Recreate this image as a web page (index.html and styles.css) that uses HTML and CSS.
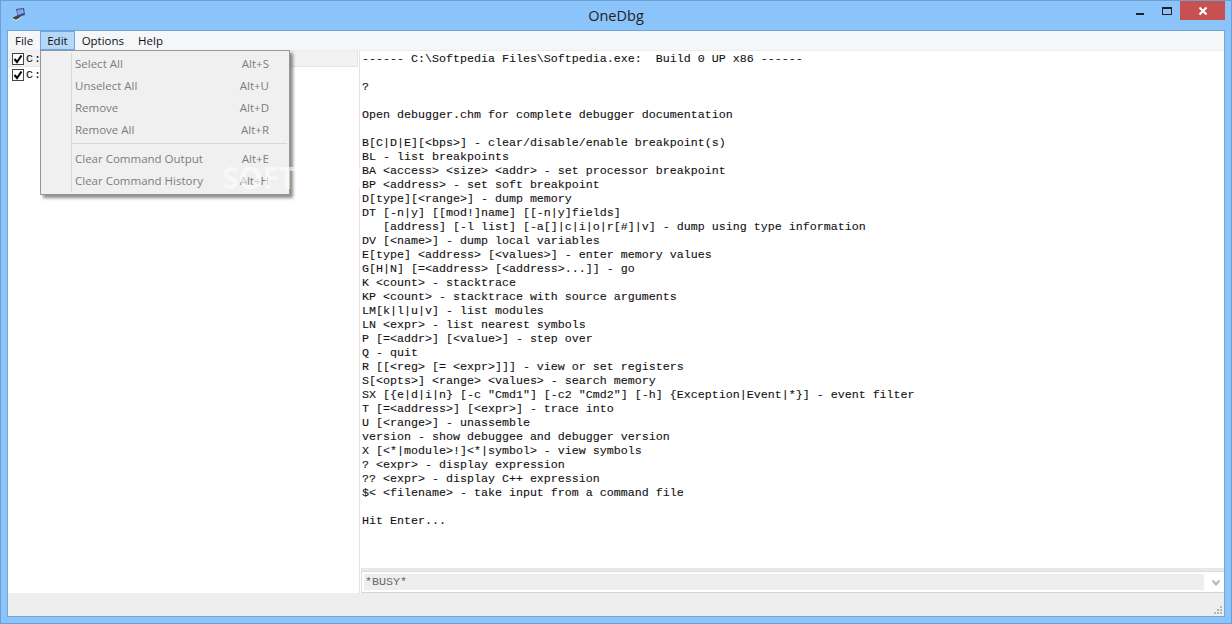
FILE: index.html
```html
<!DOCTYPE html>
<html>
<head>
<meta charset="utf-8">
<title>OneDbg</title>
<link rel="stylesheet" href="styles.css">
</head>
<body>
<div class="window">
  <header class="titlebar">
    <svg class="appicon" width="14" height="14" viewBox="0 0 14 14"><path d="M4 1l8-1 1 7-7 2z" fill="#2f4f96"/><path d="M5 2l6-1 1 4-6 2z" fill="#8fa6d8"/><path d="M0 10l6-3 3 2-5 3z" fill="#444"/><path d="M0 10l4 2 5-3v1l-5 3-4-2z" fill="#e4e4e4"/></svg>
    <div class="title">OneDbg</div>
    <div class="controls">
      <span class="min"></span>
      <span class="max"></span>
      <span class="close"><svg width="10" height="10" viewBox="0 0 10 10"><path d="M1.5 1.5l7 7M8.5 1.5l-7 7" stroke="#fff" stroke-width="2.2"/></svg></span>
    </div>
  </header>
  <div class="client">
    <nav class="menubar">
      <span class="menuitem">File</span>
      <span class="menuitem active">Edit</span>
      <span class="menuitem">Options</span>
      <span class="menuitem">Help</span>
    </nav>
    <main class="panes">
      <section class="left">
        <div class="row first"><svg class="check" width="12" height="12" viewBox="0 0 12 12"><rect x=".5" y=".5" width="11" height="11" fill="#fff" stroke="#444"/><path d="M2.5 6l2.5 3L9.5 2.5" fill="none" stroke="#000" stroke-width="2"/></svg><span class="drive">C:</span></div>
        <div class="row"><svg class="check" width="12" height="12" viewBox="0 0 12 12"><rect x=".5" y=".5" width="11" height="11" fill="#fff" stroke="#444"/><path d="M2.5 6l2.5 3L9.5 2.5" fill="none" stroke="#000" stroke-width="2"/></svg><span class="drive">C:</span></div>
      </section>
      <section class="right">
        <pre class="output">------ C:\Softpedia Files\Softpedia.exe:  Build 0 UP x86 ------

?

Open debugger.chm for complete debugger documentation

B[C|D|E][&lt;bps&gt;] - clear/disable/enable breakpoint(s)
BL - list breakpoints
BA &lt;access&gt; &lt;size&gt; &lt;addr&gt; - set processor breakpoint
BP &lt;address&gt; - set soft breakpoint
D[type][&lt;range&gt;] - dump memory
DT [-n|y] [[mod!]name] [[-n|y]fields]
   [address] [-l list] [-a[]|c|i|o|r[#]|v] - dump using type information
DV [&lt;name&gt;] - dump local variables
E[type] &lt;address&gt; [&lt;values&gt;] - enter memory values
G[H|N] [=&lt;address&gt; [&lt;address&gt;...]] - go
K &lt;count&gt; - stacktrace
KP &lt;count&gt; - stacktrace with source arguments
LM[k|l|u|v] - list modules
LN &lt;expr&gt; - list nearest symbols
P [=&lt;addr&gt;] [&lt;value&gt;] - step over
Q - quit
R [[&lt;reg&gt; [= &lt;expr&gt;]]] - view or set registers
S[&lt;opts&gt;] &lt;range&gt; &lt;values&gt; - search memory
SX [{e|d|i|n} [-c "Cmd1"] [-c2 "Cmd2"] [-h] {Exception|Event|*}] - event filter
T [=&lt;address&gt;] [&lt;expr&gt;] - trace into
U [&lt;range&gt;] - unassemble
version - show debuggee and debugger version
X [&lt;*|module&gt;!]&lt;*|symbol&gt; - view symbols
? &lt;expr&gt; - display expression
?? &lt;expr&gt; - display C++ expression
$&lt; &lt;filename&gt; - take input from a command file

Hit Enter...</pre>
        <div class="combo">
          <div class="combobox">
            <div class="combofield">*BUSY*</div>
            <svg class="arrow" width="8" height="6" viewBox="0 0 8 6"><path d="M.5 .5L4 4.5 7.5 .5" fill="none" stroke="#b4b4b4" stroke-width="2"/></svg>
          </div>
        </div>
      </section>
    </main>
    <footer class="status">
      <svg class="grip" width="9" height="9" viewBox="0 0 9 9" fill="#b8b8b8"><rect x="6" y="0" width="2" height="2"/><rect x="3" y="3" width="2" height="2"/><rect x="6" y="3" width="2" height="2"/><rect x="0" y="6" width="2" height="2"/><rect x="3" y="6" width="2" height="2"/><rect x="6" y="6" width="2" height="2"/></svg>
    </footer>
  </div>
</div>
<div class="menu">
  <div class="entry"><span>Select All</span><span>Alt+S</span></div>
  <div class="entry"><span>Unselect All</span><span>Alt+U</span></div>
  <div class="entry"><span>Remove</span><span>Alt+D</span></div>
  <div class="entry"><span>Remove All</span><span>Alt+R</span></div>
  <div class="sep"></div>
  <div class="entry"><span>Clear Command Output</span><span>Alt+E</span></div>
  <div class="entry"><span>Clear Command History</span><span>Alt+H</span></div>
</div>
<div class="watermark">SOFTPEDIA</div>
</body>
</html>
```
FILE: styles.css
```css
* { box-sizing: border-box; }
html, body { margin: 0; height: 100%; overflow: hidden; }
body { font-family: "Open Sans", "Noto Sans", sans-serif; font-size: 11.5px; color: #000; }
.window { width: 1232px; height: 624px; background: #8ac4fb; border: 1px solid #6e9fcf; display: flex; flex-direction: column; padding: 0 6px 6px; }
.titlebar { height: 29px; flex: none; display: flex; align-items: center; position: relative; margin: 0 -6px; }
.appicon { margin: -2px 0 0 11px; }
.title { position: absolute; left: 0; right: 0; text-align: center; font-size: 14.5px; color: #222; top: 5px; }
.controls { position: absolute; right: 6px; top: 0; display: flex; height: 19px; }
.min { position: absolute; right: 81px; top: 12px; width: 8px; height: 2px; background: #222; }
.max { position: absolute; right: 53px; top: 6px; width: 10px; height: 8px; border: 1px solid #222; border-top-width: 2px; }
.close { width: 45px; height: 19px; background: #c75050; display: flex; align-items: center; justify-content: center; }
.client { flex: 1; background: #fff; border: 1px solid #72a5d6; display: flex; flex-direction: column; min-height: 0; }
.menubar { height: 19px; flex: none; background: #f5f6f7; display: flex; }
.menuitem { padding: 0 6px; line-height: 18px; border: 1px solid transparent; height: 19px; color: #111; }
.menuitem.active { background: #b5d7f8; border-color: #66a7e8; }
.panes { flex: 1; display: flex; min-height: 0; border-top: 1px solid #ececec; }
.left { width: 352px; flex: none; border-right: 1px solid #e3e3e3; }
.row { height: 15px; display: flex; align-items: center; padding-left: 4px; gap: 2px; }
.row.first { background: #f2f2f2; border-right: 1px solid #e3e3e3; border-bottom: 1px solid #e3e3e3; height: 16px; margin-right: 1px; }
.check { flex: none; }
.drive { font-family: "Liberation Mono", monospace; font-size: 11.67px; letter-spacing: 1px; color: #111; -webkit-text-stroke: .1px #111; }
.right { flex: 1; min-width: 0; display: flex; flex-direction: column; }
.output { flex: 1; margin: 0; padding: 1px 0 0 2px; font-family: "Liberation Mono", monospace; font-size: 11.67px; line-height: 14px; color: #111; overflow: hidden; -webkit-text-stroke: .1px #111; }
.combo { height: 25px; flex: none; margin-left: 1px; border-top: 3px solid #e8e8e8; border-bottom: 1px solid #d6d6d6; }
.combobox { height: 21px; border-top: 1px solid #ddd; border-left: 1px solid #ddd; padding: 2px 0 0 2px; display: flex; align-items: flex-start; }
.combofield { width: 840px; height: 16px; background: #eee; font-family: "Liberation Mono", monospace; font-size: 11.67px; line-height: 17px; color: #666; padding-left: 1px; }
.arrow { margin: 6px 0 0 8px; }
.status { height: 23px; flex: none; background: #eee; position: relative; }
.grip { position: absolute; right: 1px; bottom: 1px; }
.menu { position: absolute; left: 40px; top: 50px; width: 250px; height: 145px; background: #f0f0f0; border: 1px solid #979797; box-shadow: 3px 3px 3px rgba(0,0,0,.45); padding-top: 1px; }
.menu::before { content: ""; position: absolute; left: 30px; top: 2px; bottom: 2px; width: 1px; background: #d7d7d7; }
.entry { height: 22px; display: flex; justify-content: space-between; align-items: center; padding: 0 20px 0 34px; color: #7d7d7d; }
.sep { height: 1px; background: #d7d7d7; margin: 3px 2px 3px 31px; }
.watermark { position: absolute; left: 222px; top: 163px; width: 138px; overflow: hidden; font-size: 30px; line-height: 30px; font-weight: 700; color: rgba(255,255,255,.6); white-space: nowrap; }
```
